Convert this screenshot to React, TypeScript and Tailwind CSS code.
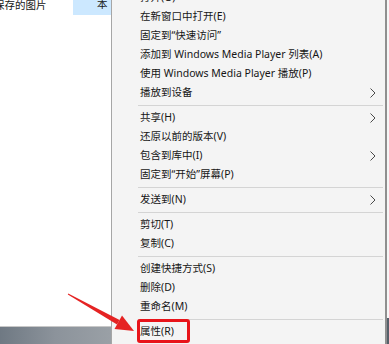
import { Fragment } from "react";

type Item = { label: string; sub?: boolean } | "sep";

const items: Item[] = [
  { label: "打开(O)" },
  { label: "在新窗口中打开(E)" },
  { label: "固定到“快速访问”" },
  { label: "添加到 Windows Media Player 列表(A)" },
  { label: "使用 Windows Media Player 播放(P)" },
  { label: "播放到设备", sub: true },
  "sep",
  { label: "共享(H)", sub: true },
  { label: "还原以前的版本(V)" },
  { label: "包含到库中(I)", sub: true },
  { label: "固定到“开始”屏幕(P)" },
  "sep",
  { label: "发送到(N)", sub: true },
  "sep",
  { label: "剪切(T)" },
  { label: "复制(C)" },
  "sep",
  { label: "创建快捷方式(S)" },
  { label: "删除(D)" },
  { label: "重命名(M)" },
  "sep",
  { label: "属性(R)" },
];

const Chevron = () => (
  <svg width="6" height="10" viewBox="0 0 6 10" className="mr-[9px]">
    <polyline points="0.5,0.5 5,5 0.5,9.5" fill="none" stroke="#4a4a4a" strokeWidth="1" />
  </svg>
);

export default function App() {
  return (
    <div
      className="relative w-[389px] h-[344px] overflow-hidden bg-white flex text-[10.5px] text-[#161616]"
      style={{ fontFamily: '"Segoe UI", "Noto Sans", "Noto Sans CJK SC", sans-serif' }}
    >
      {/* explorer behind */}
      <div className="w-[111px] flex flex-col">
        <div className="h-[15px] flex">
          <div className="w-[79px] -ml-[6px] leading-[11px] whitespace-nowrap">保存的图片</div>
          <div className="flex-1 bg-[#cce8ff] pl-[24px] leading-[11px] -mt-[1px]">本</div>
        </div>
        <div className="flex-1" />
        <div className="h-[18px] border-t border-[#c8c8c8] bg-gradient-to-r from-[#6f7983] via-[#8c939b] to-[#9aa0a6]" />
      </div>

      {/* context menu */}
      <div className="w-[276px] bg-[#f4f4f4] border-l border-[#a6a6a6] border-r-2 border-r-[#8f8f8f]">
        <div className="-mt-[12px] flex flex-col">
          {items.map((it, i) =>
            it === "sep" ? (
              <div key={i} className="h-[6px] flex items-center pl-[26px] pr-[2px]">
                <div className="h-px w-full bg-[#d4d4d4]" />
              </div>
            ) : (
              <div key={i} className="h-[19px] flex items-center justify-between pl-[28px] whitespace-nowrap">
                <span>{it.label}</span>
                {it.sub && <Chevron />}
              </div>
            )
          )}
        </div>
      </div>
      <div className="flex-1 flex flex-col">
        <div className="flex-1 bg-[#f6f6f6]" />
        <div className="h-[26px] bg-[#56606a]" />
      </div>

      {/* annotation: red box + arrow */}
      <div className="absolute left-[137px] top-[319px] w-[53px] h-[24px] border-[3px] border-[#e8141a] rounded-[3px]" />
      <svg className="absolute left-0 top-0" width="389" height="344" viewBox="0 0 389 344">
        <Fragment>
          <polygon points="67.8,294.4 68.2,293.6 119.6,320 117,324.4" fill="#e52323" />
          <polygon points="134,331 114.5,329 122,315.5" fill="#e52323" />
        </Fragment>
      </svg>
    </div>
  );
}
